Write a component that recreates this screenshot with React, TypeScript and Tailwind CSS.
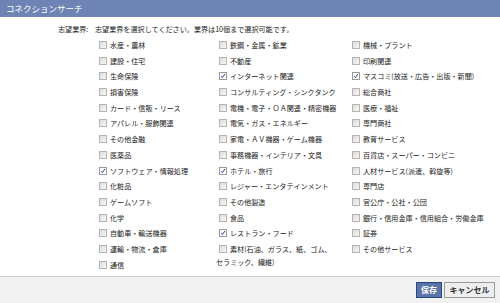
import React from 'react';

type Item = { label: React.ReactNode; checked?: boolean };

const col1: Item[] = [
  { label: '水産・農林' },
  { label: '建設・住宅' },
  { label: '生命保険' },
  { label: '損害保険' },
  { label: 'カード・信販・リース' },
  { label: 'アパレル・服飾関連' },
  { label: 'その他金融' },
  { label: '医薬品' },
  { label: 'ソフトウェア・情報処理', checked: true },
  { label: '化粧品' },
  { label: 'ゲームソフト' },
  { label: '化学' },
  { label: '自動車・輸送機器' },
  { label: '運輸・物流・倉庫' },
  { label: '通信' },
];

const col2: Item[] = [
  { label: '鉄鋼・金属・鉱業' },
  { label: '不動産' },
  { label: 'インターネット関連', checked: true },
  { label: 'コンサルティング・シンクタンク' },
  { label: '電機・電子・ＯＡ関連・精密機器' },
  { label: '電気・ガス・エネルギー' },
  { label: '家電・ＡＶ機器・ゲーム機器' },
  { label: '事務機器・インテリア・文具' },
  { label: 'ホテル・旅行', checked: true },
  { label: 'レジャー・エンタテインメント' },
  { label: 'その他製造' },
  { label: '食品' },
  { label: 'レストラン・フード', checked: true },
  {
    label: (
      <>
        素材(石油、ガラス、紙、ゴム、
        <br />
        セラミック、繊維)
      </>
    ),
  },
];

const col3: Item[] = [
  { label: '機械・プラント' },
  { label: '印刷関連' },
  { label: 'マスコミ(放送・広告・出版・新聞)', checked: true },
  { label: '総合商社' },
  { label: '医療・福祉' },
  { label: '専門商社' },
  { label: '教育サービス' },
  { label: '百貨店・スーパー・コンビニ' },
  { label: '人材サービス(派遣、斡旋等)' },
  { label: '専門店' },
  { label: '官公庁・公社・公団' },
  { label: '銀行・信用金庫・信用組合・労働金庫' },
  { label: '証券' },
  { label: 'その他サービス' },
];

function Box({ checked }: { checked?: boolean }) {
  return (
    <span
      className={
        'mx-[3px] inline-block h-[8px] w-[8px] border align-[-1px] ' +
        (checked
          ? 'border-[#9a9a9a] bg-white'
          : 'border-[#b4b4b4] bg-gradient-to-br from-[#dcdcdc] to-[#f7f7f7]')
      }
    >
      {checked && (
        <svg viewBox="0 0 8 8" className="block h-full w-full">
          <path d="M1.5 4.2 L3.2 6.2 L6.6 1.2" fill="none" stroke="#2a3f8f" strokeWidth="1.3" />
        </svg>
      )}
    </span>
  );
}

function Column({ items, width }: { items: Item[]; width: string }) {
  return (
    <ul className={width}>
      {items.map((it, i) => (
        <li key={i} className="mb-[2.7px] whitespace-nowrap leading-[13px]">
          <Box checked={it.checked} />
          {it.label}
        </li>
      ))}
    </ul>
  );
}

export default function App() {
  return (
    <div
      className="flex h-[303px] w-[500px] flex-col bg-white text-[7.1px] text-[#222]"
      style={{ fontFamily: '"Noto Sans CJK JP", "Noto Sans", sans-serif' }}
    >
      <div className="flex h-[17px] items-center bg-[#6d84b4] pl-[6px] text-[8.5px] text-white">
        コネクションサーチ
      </div>

      <div className="flex-1 pt-[5px]">
        <div className="flex h-[14px] items-center pl-[58px]">
          <span className="w-[37px]">志望業界:</span>
          <span>志望業界を選択してください。業界は10個まで選択可能です。</span>
        </div>
        <div className="mt-[3px] flex pl-[96px]">
          <Column items={col1} width="w-[120px]" />
          <Column items={col2} width="w-[133px]" />
          <Column items={col3} width="flex-1" />
        </div>
      </div>

      <div className="flex h-[27px] items-center justify-end gap-[2px] border-t border-[#cccccc] bg-[#f2f2f2] pr-[5px]">
        <button className="h-[16px] w-[26px] border border-[#29447e] bg-[#5b74a8] text-[8px] font-bold leading-none text-white">
          保存
        </button>
        <button className="h-[16px] w-[51px] border border-[#999999] bg-[#eeeeee] text-[8px] font-bold leading-none text-[#333]">
          キャンセル
        </button>
      </div>
    </div>
  );
}
